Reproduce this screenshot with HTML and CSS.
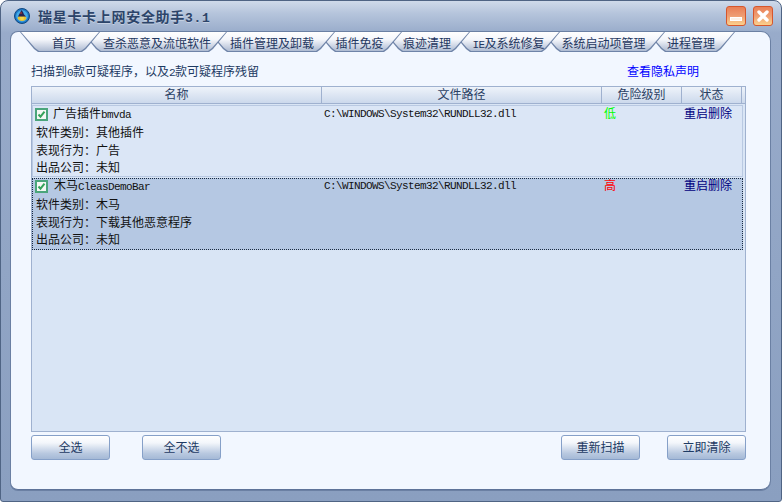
FILE: index.html
```html
<!DOCTYPE html>
<html lang="zh-CN">
<head>
    <meta charset="UTF-8">
    <title>瑞星卡卡上网安全助手3.1</title>
    <link rel="stylesheet" href="styles.css">
</head>
<body>
    <div class="window">
        <div class="titlebar">
            <svg class="logo" width="16" height="16" viewBox="0 0 16 16">
                <circle cx="8" cy="8" r="7.5" fill="#1c78c8" stroke="#12487f"/>
                <circle cx="8" cy="8" r="5.8" fill="#45ace8"/>
                <path d="M3.5 10c1-3 8-3 9 0-1 4-8 4-9 0z" fill="#e8c230"/>
                <path d="M4 8.5l3.5-6.5 1.5 2 1 2.5 2 2z" fill="#2b2450"/>
                <path d="M6 9h4l-.5 3h-3z" fill="#f4d84a"/>
                <circle cx="7" cy="5" r=".8" fill="#d9432f"/>
            </svg>
            <span class="title-text">瑞星卡卡上网安全助手<span class="title-ver">3.1</span></span>
            <div class="win-btns">
                <div class="win-btn"><div class="min-bar"></div></div>
                <div class="win-btn">
                    <svg width="14" height="14" viewBox="0 0 14 14"><path d="M3 3l8 8M11 3l-8 8" stroke="#fff" stroke-width="3.4" stroke-linecap="round"/></svg>
                </div>
            </div>
        </div>

        <div class="panel">
            <div class="tabs">
                <div class="tab tab-first" style="width:80px;z-index:8"><span>首页</span></div>
                <div class="tab tab-shift" style="width:145px;z-index:7"><span>查杀恶意及流氓软件</span></div>
                <div class="tab" style="width:126px;z-index:6"><span>插件管理及卸载</span></div>
                <div class="tab" style="width:85px;z-index:5"><span>插件免疫</span></div>
                <div class="tab" style="width:86px;z-index:4"><span>痕迹清理</span></div>
                <div class="tab tab-shift" style="width:108px;z-index:3"><span><span class="lat">IE</span>及系统修复</span></div>
                <div class="tab" style="width:123px;z-index:2"><span>系统启动项管理</span></div>
                <div class="tab" style="width:88px;z-index:1"><span>进程管理</span></div>
            </div>

            <div class="panel-body">
                <div class="summary">
                    <span>扫描到<span class="lat">0</span>款可疑程序，以及<span class="lat">2</span>款可疑程序残留</span>
                    <a class="privacy">查看隐私声明</a>
                </div>

                <div class="list">
                    <div class="list-head">
                        <div class="head-cell">名称</div>
                        <div class="head-cell">文件路径</div>
                        <div class="head-cell">危险级别</div>
                        <div class="head-cell">状态</div>
                    </div>

                    <div class="item">
                        <div class="item-top">
                            <div class="item-name">
                                <svg class="check" width="13" height="13" viewBox="0 0 13 13"><rect x="1" y="1" width="11" height="11" fill="#f4f8f4" stroke="#4aa57b" stroke-width="2"/><path d="M3.5 6.5l2 2.2 4-5" fill="none" stroke="#35a35a" stroke-width="2"/></svg>
                                <span>广告插件<span class="lat">bmvda</span></span>
                            </div>
                            <div class="item-path lat">C:\WINDOWS\System32\RUNDLL32.dll</div>
                            <div class="level-low">低</div>
                            <div class="item-state">重启删除</div>
                        </div>
                        <div class="item-line">软件类别：其他插件</div>
                        <div class="item-line">表现行为：广告</div>
                        <div class="item-line">出品公司：未知</div>
                    </div>

                    <div class="item item-selected">
                        <div class="item-top">
                            <div class="item-name">
                                <svg class="check" width="13" height="13" viewBox="0 0 13 13"><rect x="1" y="1" width="11" height="11" fill="#f4f8f4" stroke="#4aa57b" stroke-width="2"/><path d="M3.5 6.5l2 2.2 4-5" fill="none" stroke="#35a35a" stroke-width="2"/></svg>
                                <span>木马<span class="lat">CleasDemoBar</span></span>
                            </div>
                            <div class="item-path lat">C:\WINDOWS\System32\RUNDLL32.dll</div>
                            <div class="level-high">高</div>
                            <div class="item-state">重启删除</div>
                        </div>
                        <div class="item-line">软件类别：木马</div>
                        <div class="item-line">表现行为：下载其他恶意程序</div>
                        <div class="item-line">出品公司：未知</div>
                    </div>
                </div>

                <div class="actions">
                    <div class="btn-group">
                        <button class="btn">全选</button>
                        <button class="btn">全不选</button>
                    </div>
                    <div class="btn-group btn-group-right">
                        <button class="btn">重新扫描</button>
                        <button class="btn">立即清除</button>
                    </div>
                </div>
            </div>
        </div>
    </div>
</body>
</html>
```

FILE: styles.css
```css
* {
    margin: 0;
    padding: 0;
    box-sizing: border-box;
}

html, body {
    height: 100%;
    overflow: hidden;
    background: #fff;
}

body {
    font-family: "Noto Sans CJK SC", "Liberation Sans", sans-serif;
    font-size: 12px;
    color: #111;
}

/* latin text is narrower in the original bitmap font */
.lat {
    font-family: "Liberation Mono", monospace;
    font-size: 11px;
    letter-spacing: -0.6px;
}

.window {
    height: 502px;
    display: flex;
    flex-direction: column;
    border-radius: 8px 8px 3px 3px;
    border: 1px solid #4f6484;
    background: linear-gradient(180deg, #cfdaea 0, #b6c5dc 12px, #98abca 32px, #8a9fc0 100%);
    overflow: hidden;
}

.titlebar {
    height: 31px;
    flex: none;
    display: flex;
    align-items: center;
    padding: 0 8px 1px 13px;
}

.logo {
    margin-right: 8px;
    flex: none;
}

.title-text {
    font-size: 14px;
    font-weight: 700;
    letter-spacing: 0.7px;
    color: #2c4469;
    text-shadow: 0 1px 0 rgba(255,255,255,0.35);
    white-space: nowrap;
}

.title-ver {
    font-family: "Liberation Mono", monospace;
    font-size: 13px;
}

.win-btns {
    margin-left: auto;
    display: flex;
    gap: 7px;
}

.win-btn {
    width: 20px;
    height: 20px;
    border: 1px solid #d6562c;
    border-radius: 3px;
    background: linear-gradient(180deg, #e97f55 0%, #ee9a70 45%, #fbd08c 100%);
    display: flex;
    align-items: center;
    justify-content: center;
}

.min-bar {
    width: 12px;
    height: 4px;
    margin-top: 5px;
    background: #fdf3e8;
    border: 1px solid #fff;
}

.panel {
    width: 759px;
    height: 458px;
    margin-left: 10px;
    flex: none;
    background: #f2f7ff;
    border-radius: 7px 9px 9px 7px;
    border-bottom: 1px solid #5e7399;
    box-shadow: 0 0 0 1px #6b80a3;
    display: flex;
    flex-direction: column;
}

.tabs {
    height: 20px;
    flex: none;
    display: flex;
    padding-left: 9px;
}

.tab {
    position: relative;
    flex: none;
    height: 20px;
    margin-left: -18px;
    background: #6f84a8;
    clip-path: polygon(0 0, 100% 0, calc(100% - 14px) calc(100% - 3px), calc(100% - 18px) 100%, 18px 100%, 14px calc(100% - 3px));
    display: flex;
    align-items: center;
    justify-content: center;
    color: #1f3760;
    white-space: nowrap;
}

.tab::before {
    content: "";
    position: absolute;
    inset: 0 1px 1px 1px;
    background: linear-gradient(180deg, #ffffff 0%, #f4f6fb 40%, #aebbd2 100%);
    clip-path: polygon(0 0, 100% 0, calc(100% - 14px) calc(100% - 3px), calc(100% - 18px) 100%, 18px 100%, 14px calc(100% - 3px));
}

.tab span {
    position: relative;
}

.tab-first {
    margin-left: 0;
    padding-left: 8px;
}

.tab-shift {
    padding-left: 5px;
}

.panel-body {
    flex: 1;
    display: flex;
    flex-direction: column;
    padding: 10px 24px 0 20px;
}

.summary {
    height: 24px;
    flex: none;
    display: flex;
    align-items: center;
    color: #1d3a63;
    padding-bottom: 7px;
}

.privacy {
    margin-left: auto;
    margin-right: 47px;
    color: #0000ff;
}

.list {
    width: 715px;
    height: 346px;
    flex: none;
    background: #d9e5f5;
    border: 1px solid #9fb1cf;
}

.list-head {
    height: 17px;
    display: grid;
    grid-template-columns: 290px 280px 80px 60px 3px;
    background: linear-gradient(180deg, #eef3fa 0%, #ccd9ec 100%);
    border-bottom: 1px solid #9fb1cf;
    margin-bottom: 1px;
}

.head-cell {
    text-align: center;
    line-height: 14px;
    color: #2a4063;
    border-right: 1px solid #9fb1cf;
}

.item {
    width: 711px;
    height: 72px;
    margin-bottom: 1px;
    border: 1px solid #b9c9e2;
    background: #dbe6f6;
}

.item-selected {
    background: #b5c8e3;
    border: 1px dotted #1a2a40;
}

.item-top {
    height: 15px;
    display: grid;
    grid-template-columns: 289px 280px 80px 60px;
    align-items: start;
    line-height: 12px;
    margin-bottom: 2px;
}

.item-selected .item-top {
    margin-top: -1px;
}

.item-name {
    display: flex;
    align-items: flex-start;
    gap: 5px;
    padding-left: 2px;
}

.item-name span {
    padding-top: 1px;
}

.item-name span .lat,
.item-name .lat {
    padding-top: 0;
}

.check {
    flex: none;
    margin-top: 2px;
}

.item-selected .item-name > span {
    margin-left: 1px;
}

.item-path {
    padding: 2px 0 0 2px;
}

.level-low,
.level-high,
.item-state {
    padding: 1px 0 0 2px;
}

.level-low {
    color: #00ff00;
}

.level-high {
    color: #ff0000;
}

.item-state {
    color: #000080;
}

.item-line {
    height: 17.5px;
    line-height: 17.5px;
    padding-left: 3px;
}

.actions {
    display: flex;
    justify-content: space-between;
    margin-top: 3px;
}

.btn-group {
    display: flex;
    gap: 32px;
}

.btn-group-right {
    gap: 27px;
}

.btn {
    width: 79px;
    height: 25px;
    border: 1px solid #86a0c8;
    border-radius: 3px;
    padding-bottom: 2px;
    background: linear-gradient(180deg, #ffffff 0%, #f3f6fb 30%, #b9c9e0 75%, #a5b9d6 100%);
    color: #1d3a63;
    font-family: inherit;
    font-size: 12px;
}
```
